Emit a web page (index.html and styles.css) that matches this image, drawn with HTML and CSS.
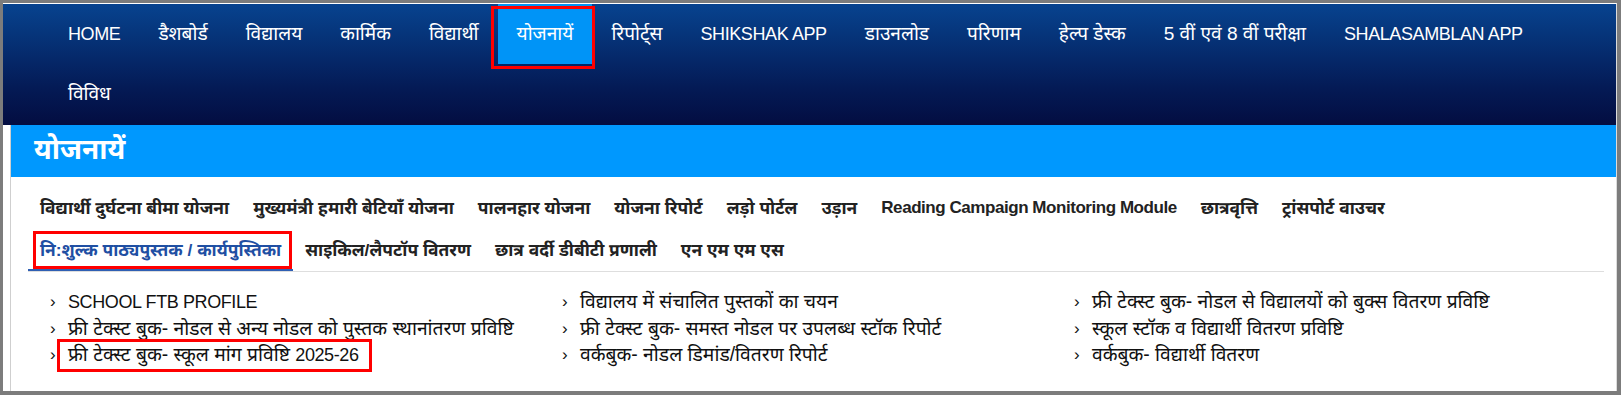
FILE: index.html
```html
<!DOCTYPE html>
<html>
  <head>
    <meta charset="utf-8">
    <title>योजनायें</title>
    <link rel="stylesheet" href="styles.css">
  </head>
  <body>
    <div class="window">
      <nav class="topnav">
        <ul class="menu">
          <li><a href="#" class="en">HOME</a></li>
          <li><a href="#">डैशबोर्ड</a></li>
          <li><a href="#">विद्यालय</a></li>
          <li><a href="#">कार्मिक</a></li>
          <li><a href="#">विद्यार्थी</a></li>
          <li class="active"><a href="#">योजनायें</a></li>
          <li><a href="#">रिपोर्ट्स</a></li>
          <li><a href="#" class="en">SHIKSHAK APP</a></li>
          <li><a href="#">डाउनलोड</a></li>
          <li><a href="#">परिणाम</a></li>
          <li><a href="#">हेल्प डेस्क</a></li>
          <li><a href="#">5 वीं एवं 8 वीं परीक्षा</a></li>
          <li><a href="#" class="en">SHALASAMBLAN APP</a></li>
          <li><a href="#">विविध</a></li>
        </ul>
      </nav>

      <div class="panel">
        <h2 class="panel-title">योजनायें</h2>

        <!-- scheme tabs -->
        <ul class="tabs">
          <li><a href="#">विद्यार्थी दुर्घटना बीमा योजना</a></li>
          <li><a href="#">मुख्यमंत्री हमारी बेटियाँ योजना</a></li>
          <li><a href="#">पालनहार योजना</a></li>
          <li><a href="#">योजना रिपोर्ट</a></li>
          <li><a href="#">लड़ो पोर्टल</a></li>
          <li><a href="#">उड़ान</a></li>
          <li><a href="#" class="en">Reading Campaign Monitoring Module</a></li>
          <li><a href="#">छात्रवृत्ति</a></li>
          <li><a href="#">ट्रांसपोर्ट वाउचर</a></li>
          <li class="current"><a href="#">नि:शुल्क पाठ्यपुस्तक / कार्यपुस्तिका</a></li>
          <li><a href="#">साइकिल/लैपटॉप वितरण</a></li>
          <li><a href="#">छात्र वर्दी डीबीटी प्रणाली</a></li>
          <li><a href="#">एन एम एम एस</a></li>
        </ul>

        <div class="links">
          <ul>
            <li><a href="#" class="en">SCHOOL FTB PROFILE</a></li>
            <li><a href="#">फ्री टेक्स्ट बुक- नोडल से अन्य नोडल को पुस्तक स्थानांतरण प्रविष्टि</a></li>
            <li><a href="#" class="marked">फ्री टेक्स्ट बुक- स्कूल मांग प्रविष्टि <span class="en">2025-26</span></a></li>
          </ul>
          <ul>
            <li><a href="#">विद्यालय में संचालित पुस्तकों का चयन</a></li>
            <li><a href="#">फ्री टेक्स्ट बुक- समस्त नोडल पर उपलब्ध स्टॉक रिपोर्ट</a></li>
            <li><a href="#">वर्कबुक- नोडल डिमांड/वितरण रिपोर्ट</a></li>
          </ul>
          <ul>
            <li><a href="#">फ्री टेक्स्ट बुक- नोडल से विद्यालयों को बुक्स वितरण प्रविष्टि</a></li>
            <li><a href="#">स्कूल स्टॉक व विद्यार्थी वितरण प्रविष्टि</a></li>
            <li><a href="#">वर्कबुक- विद्यार्थी वितरण</a></li>
          </ul>
        </div>
      </div>
    </div>
  </body>
</html>
```

FILE: styles.css
```css
body {
  margin: 0;
  padding: 3px 4px 4px 3px;
  background-color: #7c7c7c;
  font-family: "Liberation Sans", "Noto Sans Devanagari", "Noto Sans", sans-serif;
  overflow: hidden;
}
a {
  text-decoration: none;
}
ul {
  list-style: none;
  margin: 0;
  padding: 0;
}

.window {
  height: 387px;
  background-color: #fff;
  border-top: 1px solid #fff;
  border-right: 1px solid #dcdcdc;
  overflow: hidden;
}

/* top menu */
.topnav {
  height: 121px;
  background: linear-gradient(#07438f, #041a55 70%, #030d41);
}
.menu {
  display: flex;
  flex-wrap: wrap;
  padding: 0 60px 0 46px;
}
.menu a {
  display: block;
  padding: 20px 19px 20px;
  line-height: 20px;
  font-size: 19.1px;
  color: #fff;
}
.menu .en {
  font-size: 18px;
  letter-spacing: -0.4px;
}
.menu .active {
  position: relative;
  background-color: #0094f7;
}
.menu .active::after {
  content: "";
  position: absolute;
  top: 2px;
  bottom: -5px;
  left: -7px;
  right: -3px;
  border: 3px solid #f00;
}

/* content panel */
.panel {
  margin-left: 7px;
  height: 100%;
  border-left: 1px solid #cfcfcf;
}
.panel-title {
  margin: 0;
  height: 52px;
  line-height: 50px;
  padding-left: 23px;
  background-color: #0098fe;
  color: #fff;
  font-size: 28px;
  font-weight: bold;
}

.tabs {
  display: flex;
  flex-wrap: wrap;
  margin: 10px 12px 0 17px;
  border-bottom: 1px solid #dedede;
}
.tabs a {
  display: block;
  padding: 11px 12px;
  line-height: 20px;
  font-size: 17.4px;
  font-weight: bold;
  color: #222;
}
.tabs .en {
  font-size: 17px;
  letter-spacing: -0.45px;
}
.tabs .current {
  position: relative;
}
.tabs .current a {
  color: #1f4fa3;
  padding-bottom: 9px;
  border-bottom: 2px solid #2f5fb3;
}
.tabs .current::after {
  content: "";
  position: absolute;
  top: 2px;
  bottom: 2px;
  left: 5px;
  right: 1px;
  border: 3px solid #f00;
}

/* link columns */
.links {
  display: grid;
  grid-template-columns: repeat(3, 512px);
  margin: 17px 0 0 29px;
}
.links li {
  display: flex;
  padding-left: 10px;
  line-height: 26.5px;
  font-size: 19.3px;
}
.links li::before {
  content: "\203A";
  flex: none;
  width: 18px;
  font-size: 17px;
  color: #111;
}
.links a {
  color: #111;
}
.links .en {
  font-size: 18px;
  letter-spacing: -0.4px;
}
.links .marked {
  display: inline-block;
  margin-left: -8px;
  padding: 0 10px 0 8px;
  line-height: 25px;
  outline: 3px solid #f00;
}
```
